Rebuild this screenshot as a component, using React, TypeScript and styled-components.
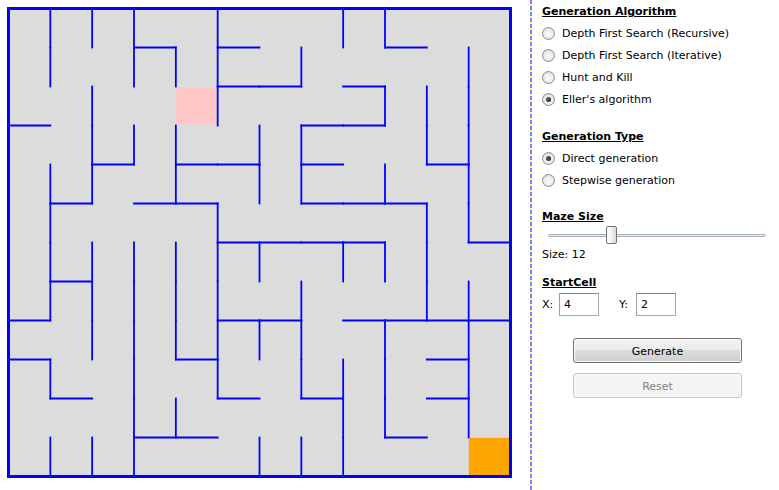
import React from "react";
import styled, { createGlobalStyle } from "styled-components";

const GlobalStyle = createGlobalStyle`
  html, body { margin: 0; padding: 0; background: #ffffff; }
  body {
    font-family: "DejaVu Sans", Verdana, sans-serif;
    font-size: 11px;
    color: #000000;
  }
`;

const Window = styled.div`
  display: flex;
  width: 779px;
  height: 490px;
  overflow: hidden;
  background: #ffffff;
`;

const MazePane = styled.div`
  width: 530px;
  flex: none;
`;

const MazeSvg = styled.svg`
  display: block;
`;

const Splitter = styled.div`
  width: 2px;
  flex: none;
  background: repeating-linear-gradient(
    to bottom,
    #7f7fff 0px,
    #7f7fff 4px,
    #ffff7f 4px,
    #ffff7f 6px
  );
`;

const Panel = styled.div`
  flex: 1;
  display: flex;
  flex-direction: column;
  padding: 3px 0 0 10px;
`;

const Heading = styled.div<{ $gap?: number }>`
  box-sizing: border-box;
  font-weight: bold;
  text-decoration: underline;
  line-height: 16px;
  height: 17px;
  padding-top: 1px;
  margin-top: ${(p) => p.$gap ?? 0}px;
  white-space: nowrap;
`;

const RadioGroup = styled.div`
  display: flex;
  flex-direction: column;
  margin-top: 2px;
`;

const RadioRow = styled.label`
  display: flex;
  align-items: center;
  height: 22px;
  white-space: nowrap;
`;

const RadioCircle = styled.span<{ $checked?: boolean }>`
  position: relative;
  box-sizing: border-box;
  width: 13px;
  height: 13px;
  border-radius: 50%;
  border: 1px solid #8b8e90;
  background: radial-gradient(
    circle at 50% 55%,
    #fbfbfb 0%,
    #eeeeee 45%,
    #cbcdce 100%
  );
  margin-right: 7px;
  flex: none;

  &::after {
    content: "";
    display: ${(p) => (p.$checked ? "block" : "none")};
    position: absolute;
    left: 3px;
    top: 3px;
    width: 5px;
    height: 5px;
    border-radius: 50%;
    background: radial-gradient(circle at 40% 40%, #6a6a6a 0%, #1c1c1c 80%);
  }
`;

const SliderRow = styled.div`
  position: relative;
  height: 21px;
`;

const SliderTrack = styled.div`
  position: absolute;
  left: 6px;
  right: 13px;
  top: 9px;
  height: 3px;
  border: 1px solid #a8b0ba;
  border-radius: 2px;
  background: #e7eaea;
  box-sizing: border-box;
`;

const SliderThumb = styled.div`
  position: absolute;
  top: 1px;
  width: 11px;
  height: 18px;
  box-sizing: border-box;
  border: 1px solid #6f7377;
  border-radius: 2px;
  background: linear-gradient(to right, #ffffff 0%, #f1f1f1 50%, #d6d8da 100%);
`;

const TextLine = styled.div`
  box-sizing: border-box;
  line-height: 16px;
  height: 16px;
  padding-top: 1px;
`;

const FieldRow = styled.div`
  display: flex;
  align-items: center;
  height: 23px;
  margin-top: 2px;
`;

const FieldLabel = styled.span<{ $gap?: number }>`
  width: 17px;
  margin-left: ${(p) => p.$gap ?? 0}px;
  flex: none;
`;

const TextBox = styled.input`
  box-sizing: border-box;
  width: 40px;
  height: 23px;
  margin: 0;
  padding: 0 0 0 4px;
  border: 1px solid #a3acb6;
  border-top-color: #7f8b97;
  border-left-color: #98a2ad;
  font-family: "DejaVu Sans", Verdana, sans-serif;
  font-size: 11px;
  color: #000;
  background: #fff;
  outline: none;
`;

const Button = styled.button<{ $disabled?: boolean; $gap: number }>`
  box-sizing: border-box;
  width: 169px;
  height: 25px;
  margin: ${(p) => p.$gap}px 0 0 31px;
  padding: 1px 0 0 0;
  font-family: "DejaVu Sans", Verdana, sans-serif;
  font-size: 11px;
  border-radius: 3px;
  color: ${(p) => (p.$disabled ? "#838383" : "#000000")};
  border: 1px solid ${(p) => (p.$disabled ? "#c4c7ca" : "#707070")};
  background: ${(p) =>
    p.$disabled
      ? "#f4f4f4"
      : "linear-gradient(to bottom, #f3f3f3 0%, #ebebeb 50%, #dddddd 50%, #cfcfcf 100%)"};
  box-shadow: inset 0 0 0 1px ${(p) => (p.$disabled ? "#f8f8f8" : "#fbfbfb")};
`;

/* ---------- maze data ---------- */

const X0 = 8.5;
const Y0 = 8.5;
const CW = 502 / 12;
const CH = 39;

// vertical walls per row: boundary index b (wall between column b-1 and b)
const V: number[][] = [
  [1, 2, 3, 5, 8, 9],
  [1, 3, 4, 5, 7, 11],
  [2, 5, 9, 10, 11],
  [2, 3, 4, 6, 7, 10, 11],
  [1, 2, 4, 6, 7, 9, 11],
  [1, 5, 10, 11],
  [1, 2, 3, 4, 5, 6, 8, 9, 10],
  [1, 2, 3, 4, 5, 7, 10, 11],
  [2, 3, 4, 5, 6, 7, 9, 11],
  [1, 3, 5, 7, 8, 9, 11],
  [3, 4, 8, 9, 11],
  [1, 2, 3, 6, 7, 8],
];

// horizontal walls per row boundary 1..11: columns with a wall
const H: number[][] = [
  [3, 5, 9],
  [5, 6, 8],
  [0, 7, 8],
  [2, 4, 5, 7, 10],
  [1, 3, 4, 7, 8, 9],
  [5, 6, 7, 8, 11],
  [1],
  [0, 5, 6, 8, 9, 10, 11],
  [0, 4, 10],
  [1, 5, 7, 10],
  [3, 4, 9],
];

const Maze: React.FC = () => {
  const lines: React.ReactNode[] = [];
  V.forEach((row, r) =>
    row.forEach((b) => {
      const x = X0 + b * CW;
      lines.push(
        <line
          key={`v${r}-${b}`}
          x1={x}
          y1={Y0 + r * CH}
          x2={x}
          y2={Y0 + (r + 1) * CH}
        />
      );
    })
  );
  H.forEach((row, i) =>
    row.forEach((c) => {
      const y = Y0 + (i + 1) * CH;
      lines.push(
        <line
          key={`h${i}-${c}`}
          x1={X0 + c * CW}
          y1={y}
          x2={X0 + (c + 1) * CW}
          y2={y}
        />
      );
    })
  );
  const cell = (r: number, c: number, fill: string) => (
    <rect
      x={X0 + c * CW + 0.2}
      y={Y0 + r * CH + 0.3}
      width={CW - 1}
      height={CH - 1.3}
      fill={fill}
    />
  );
  return (
    <MazeSvg width={530} height={490} viewBox="0 0 530 490">
      <rect x={X0} y={Y0} width={502} height={468} fill="#dcdcdc" />
      {cell(2, 4, "#ffc8c8")}
      {cell(11, 11, "#ffa500")}
      <g stroke="#0000ff" strokeWidth={1.8} strokeLinecap="square">
        {lines}
      </g>
      <rect
        x={X0}
        y={Y0}
        width={502}
        height={468}
        fill="none"
        stroke="#0000ff"
        strokeWidth={3}
      />
    </MazeSvg>
  );
};

const algorithms = [
  { label: "Depth First Search (Recursive)", checked: false },
  { label: "Depth First Search (Iterative)", checked: false },
  { label: "Hunt and Kill", checked: false },
  { label: "Eller's algorithm", checked: true },
];

const genTypes = [
  { label: "Direct generation", checked: true },
  { label: "Stepwise generation", checked: false },
];

const SIZE = 12;
const MIN = 5;
const MAX = 30;
const TRACK_LEFT = 6;
const TRACK_WIDTH = 218;
const THUMB_W = 11;

export default function App() {
  const thumbLeft =
    TRACK_LEFT + ((SIZE - MIN) / (MAX - MIN)) * (TRACK_WIDTH - THUMB_W);
  return (
    <>
      <GlobalStyle />
      <Window>
        <MazePane>
          <Maze />
        </MazePane>
        <Splitter />
        <Panel>
          <Heading>Generation Algorithm</Heading>
          <RadioGroup>
            {algorithms.map((a) => (
              <RadioRow key={a.label}>
                <RadioCircle $checked={a.checked} />
                {a.label}
              </RadioRow>
            ))}
          </RadioGroup>

          <Heading $gap={18}>Generation Type</Heading>
          <RadioGroup>
            {genTypes.map((a) => (
              <RadioRow key={a.label}>
                <RadioCircle $checked={a.checked} />
                {a.label}
              </RadioRow>
            ))}
          </RadioGroup>

          <Heading $gap={17}>Maze Size</Heading>
          <SliderRow>
            <SliderTrack />
            <SliderThumb style={{ left: thumbLeft }} />
          </SliderRow>
          <TextLine>Size: {SIZE}</TextLine>

          <Heading $gap={12}>StartCell</Heading>
          <FieldRow>
            <FieldLabel>X:</FieldLabel>
            <TextBox defaultValue="4" />
            <FieldLabel $gap={20}>Y:</FieldLabel>
            <TextBox defaultValue="2" />
          </FieldRow>

          <Button $gap={22}>Generate</Button>
          <Button $gap={10} $disabled>
            Reset
          </Button>
        </Panel>
      </Window>
    </>
  );
}
